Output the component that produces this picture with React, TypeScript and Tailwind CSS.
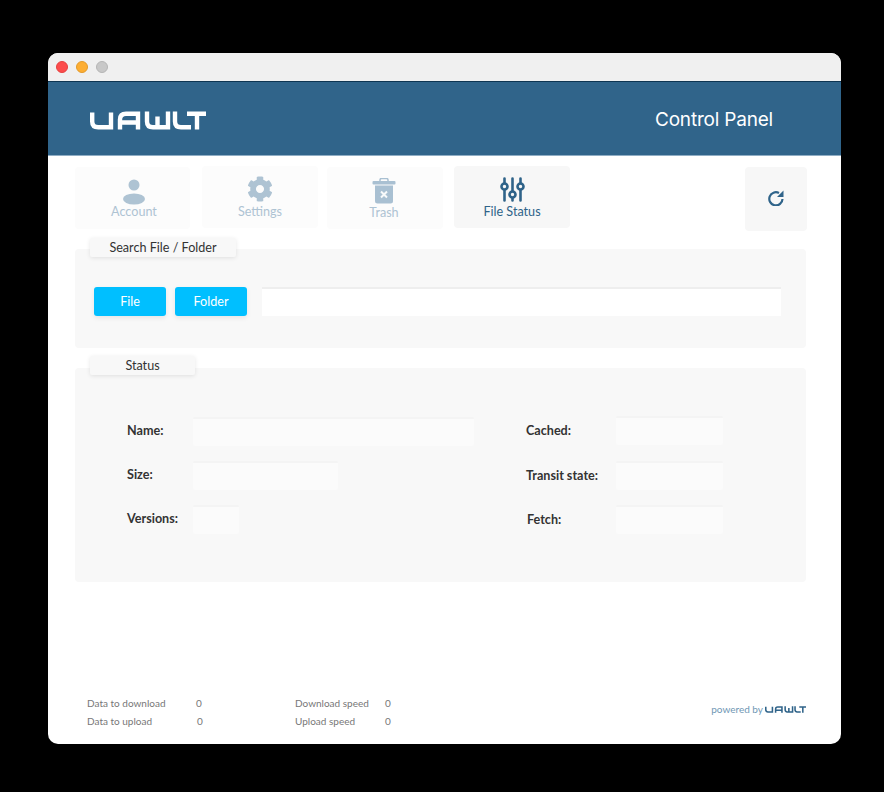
import { FaCog } from 'react-icons/fa';

const lato = "font-['Lato',sans-serif]";

function Logo({ className, color }: { className: string; color: string }) {
  return (
    <svg viewBox="0 0 116 18" className={className} fill="none" stroke={color} strokeWidth="4.400">
      <path d="M2.200 1v9c0 4 2 5.800 6 5.800h12.800V1" />
      <path d="M30 18V8c0-4 2-5.800 6-5.800h12v15.800M30 11h18" />
      <path d="M57 0v10c0 4 2 5.800 6 5.800h15V0M67.500 5v11" />
      <path d="M85 0v10c0 4 2 5.800 6 5.800h10" />
      <path d="M97 2.200h19M107 2v16" />
    </svg>
  );
}

function UserIcon() {
  return (
    <svg viewBox="0 0 24 26" className="h-[26px] w-[24px]" fill="#aec3d3">
      <circle cx="12" cy="6" r="5.500" />
      <ellipse cx="12" cy="20" rx="11" ry="5.500" />
    </svg>
  );
}

function TrashIcon() {
  return (
    <svg viewBox="0 0 24 26" className="h-[26px] w-[24px]">
      <path d="M8 3V2q0-1.500 1.500-1.500h5Q16 .500 16 2v1" fill="none" stroke="#a9c0d2" strokeWidth="1.500" />
      <rect x="0.500" y="3" width="23" height="3.500" rx="1" fill="#a9c0d2" />
      <path d="M3 7.500h18V23q0 2.500-2.500 2.500h-13Q3 25.500 3 23z" fill="#a9c0d2" />
      <path d="M9 13.500l6 6M15 13.500l-6 6" stroke="#f8fafb" strokeWidth="2" />
    </svg>
  );
}

function SlidersIcon() {
  return (
    <svg viewBox="0 0 25 25" className="h-[25px] w-[25px]" fill="none" stroke="#2f6389" strokeWidth="2.600" strokeLinecap="round">
      <path d="M4.500 1.500v4.500M4.500 13v10.500M12.500 1.500v12.500M12.500 21v2.500M20.500 1.500v4.500M20.500 13v10.500" />
      <circle cx="4.500" cy="9.500" r="3" />
      <circle cx="12.500" cy="17.500" r="3" />
      <circle cx="20.500" cy="9.500" r="3" />
    </svg>
  );
}

function RefreshIcon() {
  return (
    <svg viewBox="0 0 16 16" className="h-[16px] w-[16px]" fill="none">
      <path d="M11 3A6.600 6.600 0 1 0 14.500 9" stroke="#30648a" strokeWidth="2.200" />
      <path d="M15.500 .500v6.500h-6.500z" fill="#30648a" />
    </svg>
  );
}

function Field({ label, labelClass, boxClass }: { label: string; labelClass: string; boxClass: string }) {
  return (
    <div className="flex h-[29px] items-center">
      <span className={`text-[12.6px] leading-none font-bold text-[#333] ${labelClass}`}>{label}</span>
      <div className={`h-[29px] rounded-[2px] border-t-[2px] border-[#f4f4f4] bg-[#fbfbfb] ${boxClass}`} />
    </div>
  );
}

function Stat({ label, value, labelWidth }: { label: string; value: string; labelWidth: string }) {
  return (
    <div className="flex h-[18px] items-center text-[10px] text-[#777]">
      <span className={labelWidth}>{label}</span>
      <span>{value}</span>
    </div>
  );
}

export default function App() {
  return (
    <div className={`min-h-[792px] bg-black pt-[53px] pl-[48px] ${lato}`}>
      <div className="flex h-[691px] w-[793px] flex-col overflow-hidden rounded-[10px] bg-white">
        <div className="flex h-[29px] items-center gap-[8px] border-b border-[#0e3552] bg-[#f0f0f0] pb-[1px] pl-[8px]">
          <span className="h-[12px] w-[12px] rounded-full border border-[#e5403f] bg-[#fc4c4c]" />
          <span className="h-[12px] w-[12px] rounded-full border border-[#e39a2a] bg-[#fdae33]" />
          <span className="h-[12px] w-[12px] rounded-full border border-[#b5b5b5] bg-[#c8c8c8]" />
        </div>

        <header className="flex h-[74px] items-center justify-between border-b border-[#8fadc4] bg-[#30648a] pt-[3px] pr-[68px] pl-[42px]">
          <Logo className="h-[19px] w-[116px]" color="#ffffff" />
          <h1 className="font-['Inter',sans-serif] text-[19px] tracking-[-0.2px] text-white">Control Panel</h1>
        </header>

        <nav className="mt-[10px] flex items-start pl-[27px]">
          <button className="mt-[1px] flex h-[62px] w-[115px] flex-col items-center rounded-[4px] bg-[#fcfcfc] pt-[12px] pl-[3px] text-[12.6px] leading-[16px] text-[#aec3d3]">
            <UserIcon />
            <span className="-mt-[1px]">Account</span>
          </button>
          <button className="ml-[12px] flex h-[62px] w-[116px] flex-col items-center rounded-[4px] bg-[#fcfcfc] pt-[10px] text-[12.6px] leading-[16px] text-[#aec3d3]">
            <FaCog className="h-[26px] w-[26px]" />
            <span className="mt-[2px]">Settings</span>
          </button>
          <button className="mt-[1px] ml-[9px] flex h-[62px] w-[116px] flex-col items-center rounded-[4px] bg-[#fcfcfc] pt-[11px] pr-[2px] text-[12.6px] leading-[16px] text-[#aec3d3]">
            <TrashIcon />
            <span className="mt-[1px]">Trash</span>
          </button>
          <button className="ml-[11px] flex h-[62px] w-[116px] flex-col items-center rounded-[4px] bg-[#f7f7f7] pt-[11px] text-[12.6px] leading-[16px] text-[#2f6389]">
            <SlidersIcon />
            <span className="mt-[2px]">File Status</span>
          </button>
          <button className="mt-[1px] ml-[175px] flex h-[64px] w-[62px] items-center justify-center rounded-[4px] bg-[#f7f7f7] pb-[2px]">
            <RefreshIcon />
          </button>
        </nav>

        <section className="relative mt-[18px] ml-[27px] h-[99px] w-[731px] rounded-[4px] bg-[#f8f8f8] pt-[38px] pl-[19px]">
          <div className="absolute top-[-11px] left-[15px] flex h-[19px] w-[146px] items-center justify-center rounded-[2px] bg-[#f8f8f8] pt-[1px] text-[12.6px] text-[#333] shadow-[0_1px_4px_rgba(0,0,0,0.1)]">
            Search File / Folder
          </div>
          <div className="flex items-center">
            <button className="h-[29px] w-[72px] rounded-[3px] bg-[#00bfff] pt-[1px] text-[12.6px] text-white shadow-[0_2px_5px_rgba(0,0,0,0.08)]">File</button>
            <button className="ml-[9px] h-[29px] w-[72px] rounded-[3px] bg-[#00bfff] pt-[1px] text-[12.6px] text-white shadow-[0_2px_5px_rgba(0,0,0,0.08)]">Folder</button>
            <div className="ml-[15px] h-[29px] w-[519px] border-t-[2px] border-[#eeeeee] bg-white" />
          </div>
        </section>

        <section className="relative mt-[20px] ml-[27px] h-[214px] w-[731px] rounded-[4px] bg-[#f8f8f8] pt-[49px]">
          <div className="absolute top-[-12px] left-[15px] flex h-[19px] w-[105px] items-center justify-center rounded-[2px] bg-[#f8f8f8] pt-[1px] text-[12.6px] text-[#333] shadow-[0_1px_4px_rgba(0,0,0,0.1)]">
            Status
          </div>
          <div className="flex">
            <div className="ml-[52px] flex w-[399px] flex-col gap-[15px]">
              <Field label="Name:" labelClass="w-[66px]" boxClass="w-[281px]" />
              <Field label="Size:" labelClass="w-[66px]" boxClass="w-[145px]" />
              <Field label="Versions:" labelClass="w-[66px]" boxClass="w-[46px]" />
            </div>
            <div className="-mt-[1px] flex flex-col">
              <Field label="Cached:" labelClass="w-[90px] pt-[2px]" boxClass="w-[107px]" />
              <div className="mt-[16px]">
                <Field label="Transit state:" labelClass="w-[90px] pt-[2px]" boxClass="w-[107px]" />
              </div>
              <div className="mt-[15px]">
                <Field label="Fetch:" labelClass="w-[89px] ml-[1px] pt-[2px]" boxClass="w-[107px]" />
              </div>
            </div>
          </div>
        </section>

        <footer className="mt-auto mb-[14px] flex items-center pr-[35px] pl-[39px]">
          <div className="w-[208px]">
            <Stat label="Data to download" value="0" labelWidth="w-[109px]" />
            <Stat label="Data to upload" value="0" labelWidth="w-[110px]" />
          </div>
          <div>
            <Stat label="Download speed" value="0" labelWidth="w-[90px]" />
            <Stat label="Upload speed" value="0" labelWidth="w-[90px]" />
          </div>
          <div className="mb-[6px] ml-auto flex items-center gap-[2px] text-[10px] text-[#6f97b4]">
            powered by
            <Logo className="h-[7px] w-[41px]" color="#2f6389" />
          </div>
        </footer>
      </div>
    </div>
  );
}
